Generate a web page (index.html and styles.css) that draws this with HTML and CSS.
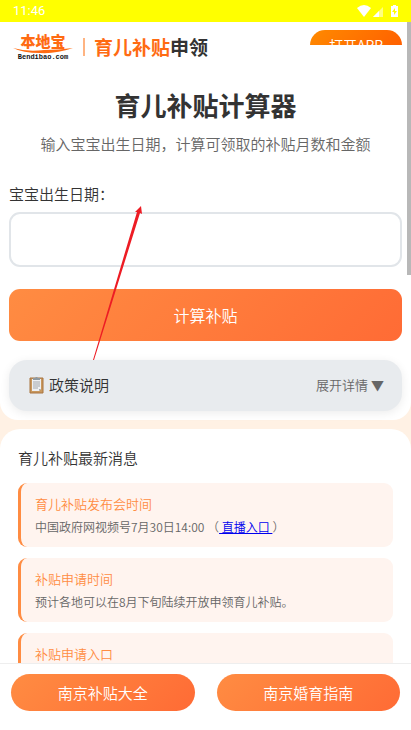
FILE: index.html
```html
<!DOCTYPE html>
<html lang="zh-CN">
<head>
<meta charset="utf-8">
<meta name="viewport" content="width=device-width, initial-scale=1">
<title>育儿补贴计算器</title>
<link rel="stylesheet" href="styles.css">
</head>
<body>
<div class="status">
  <span>11:46</span>
  <svg class="status-icons" width="42" height="14" viewBox="0 0 42 14" aria-hidden="true">
    <path d="M0 4Q7 -2 14 4L7 13Z" fill="#fff"/>
    <path d="M16 13L26 3V13Z" fill="#fff" opacity=".5"/>
    <path d="M16 13L22 7V13Z" fill="#fff"/>
    <path d="M36 1h3v1h2v11h-7V2h2z" fill="#fff"/>
    <path d="M38 4L35 8h2v3l3-4h-2z" fill="#ff0"/>
  </svg>
</div>
<main class="page">
  <section class="card calculator">
    <header class="header">
      <a class="logo" href="#" aria-label="本地宝">
        <span class="logo-name">本地宝</span>
        <svg class="swoosh" width="60" height="6" viewBox="0 0 60 6" aria-hidden="true"><path d="M0 0Q14 4 31 2Q46 2 60 0Q43 6 27 5Q10 5 0 0Z" fill="#ff6b12"/></svg>
        <span class="logo-domain">Bendibao.com</span>
      </a>
      <span class="divider"></span>
      <span class="brand">育儿补贴<span class="brand-dark">申领</span></span>
      <div class="app-clip"><button class="app-button" type="button">打开APP</button></div>
    </header>
    <div class="intro">
      <h1>育儿补贴计算器</h1>
      <p>输入宝宝出生日期，计算可领取的补贴月数和金额</p>
    </div>
    <form class="form">
      <label for="birth">宝宝出生日期：</label>
      <input id="birth" type="text">
      <button class="submit" type="button">计算补贴</button>
    </form>
    <button class="policy" type="button">
      <span class="policy-title">
        <svg width="15" height="18" viewBox="0 0 15 18" aria-hidden="true">
          <path d="M1 2h13v15H1z" fill="#c9985e" stroke="#a87440"/>
          <path d="M3 3h9v10l-2 2H3z" fill="#eef0f3"/>
          <path d="M10 15v-2h2z" fill="#a5acb3"/>
          <path d="M4 2h2l1-1h1l1 1h2v2H4z" fill="#8f999f"/>
          <path d="M4 6h7M4 8h7M4 10h7M4 12h5" stroke="#a4a7ab"/>
        </svg>
        政策说明
      </span>
      <span class="policy-more">展开详情 ▼</span>
    </button>
    <svg class="pointer" width="50" height="155" viewBox="0 0 50 155" aria-hidden="true">
      <path d="M0 154L44 6L42 6L48 0L49 8L47 7L1 154Z" fill="#ed1c24"/>
    </svg>
  </section>
  <section class="card news">
    <h2>育儿补贴最新消息</h2>
    <article class="item">
      <h3>育儿补贴发布会时间</h3>
      <p>中国政府网视频号7月30日14:00 （<a href="#">&nbsp;直播入口&nbsp;</a>）</p>
    </article>
    <article class="item">
      <h3>补贴申请时间</h3>
      <p>预计各地可以在8月下旬陆续开放申领育儿补贴。</p>
    </article>
    <article class="item">
      <h3>补贴申请入口</h3>
    </article>
  </section>
  <span class="scroll-thumb"></span>
</main>
<nav class="bottom">
  <a href="#">南京补贴大全</a>
  <a href="#">南京婚育指南</a>
</nav>
</body>
</html>
```
FILE: styles.css
```css
* { box-sizing: border-box; }
body {
  margin: 0;
  height: 100vh;
  display: flex;
  flex-direction: column;
  overflow: hidden;
  background: #fff1e4;
  color: #333;
  font-family: "Noto Sans CJK SC", sans-serif;
  font-size: 15px;
  font-weight: 350;
}
h1, h2, h3, p { margin: 0; font-weight: inherit; }
button, input { font: inherit; border: 0; }
.status {
  flex: none;
  height: 22px;
  padding: 0 12px 0 13px;
  display: flex;
  align-items: center;
  justify-content: space-between;
  background: #ff0;
  color: #fff;
  font: 13px/22px Roboto, sans-serif;
}
.page {
  flex: 1;
  min-height: 0;
  position: relative;
  overflow: hidden;
}
.card { background: #fff; border-radius: 20px; }
.calculator {
  position: relative;
  border-radius: 0 0 18px 18px;
  padding: 0 9px 9px;
}
.header {
  display: flex;
  align-items: center;
  height: 50px;
  padding-left: 4px;
}
.logo {
  width: 60px;
  display: flex;
  flex-direction: column;
  align-items: center;
  color: #ff6b12;
  text-decoration: none;
}
.logo-name { font: 900 15px/14px "Noto Sans CJK SC", sans-serif; }
.swoosh { display: block; }
.logo-domain {
  color: #111;
  font: bold 7px/7px "Liberation Mono", monospace;
}
.divider {
  width: 2px;
  height: 18px;
  margin: 0 9px 0 10px;
  background: #ffb482;
}
.brand {
  color: #ff6b12;
  font-size: 19px;
  line-height: 24px;
  font-weight: 700;
}
.brand-dark { color: #333; }
.app-clip {
  align-self: flex-start;
  width: 92px;
  height: 15px;
  margin: 8px 0 0 auto;
  overflow: hidden;
}
.app-button {
  display: block;
  width: 100%;
  height: 30px;
  padding: 0;
  border-radius: 15px;
  background: linear-gradient(135deg, #ff8a00, #ff5a00);
  color: #fff;
  font-size: 14px;
  line-height: 28px;
}
.intro { padding-top: 14px; text-align: center; }
h1 { font-size: 26px; line-height: 38px; font-weight: 700; }
.intro p { padding-top: 9px; color: #666; line-height: 22px; }
.form { display: flex; flex-direction: column; padding-top: 28px; }
.form label { line-height: 22px; }
.form input {
  height: 55px;
  margin-top: 7px;
  padding: 0 14px;
  border: 2px solid #e1e5e9;
  border-radius: 11px;
  background: #fff;
}
.submit {
  height: 52px;
  margin-top: 22px;
  border-radius: 11px;
  background: linear-gradient(135deg, #ff8c42, #ff6b35);
  color: #fff;
  font-size: 16px;
}
.policy {
  width: 100%;
  height: 51px;
  margin-top: 19px;
  padding: 0 18px 2px;
  display: flex;
  align-items: center;
  justify-content: space-between;
  border-radius: 18px;
  background: #e8ebee;
  color: #333;
  box-shadow: 0 2px 10px rgba(0, 0, 0, .08);
}
.policy-title { display: flex; align-items: center; gap: 5px; padding-left: 2px; }
.policy-more { color: #666; font-size: 13px; }
.pointer { position: absolute; left: 93px; top: 184px; }
.news {
  margin-top: 9px;
  padding: 18px 18px 0;
}
.news h2 { font-size: 15px; line-height: 22px; }
.item {
  min-height: 64px;
  margin-top: 11px;
  padding: 11px 14px 9px;
  border-left: 3px solid #ff8c42;
  border-radius: 9px;
  background: #fff4ef;
}
.news h2 + .item { margin-top: 14px; }
.item h3 { color: #ff8c42; font-size: 13px; line-height: 20px; }
.item p { padding-top: 3px; color: #666; font-size: 12px; line-height: 20px; }
.item a { color: #00e; }
.scroll-thumb {
  position: absolute;
  top: 0;
  right: 0;
  width: 4px;
  height: 253px;
  background: #b8b8b8;
}
.bottom {
  flex: none;
  height: 67px;
  display: flex;
  align-items: flex-start;
  gap: 22px;
  padding: 10px 11px 0;
  border-top: 1px solid #eee;
  background: #fff;
}
.bottom a {
  flex: 1;
  border-radius: 19px;
  background: linear-gradient(135deg, #ff8c42, #ff6b35);
  color: #fff;
  line-height: 37px;
  text-align: center;
  text-decoration: none;
}
```
